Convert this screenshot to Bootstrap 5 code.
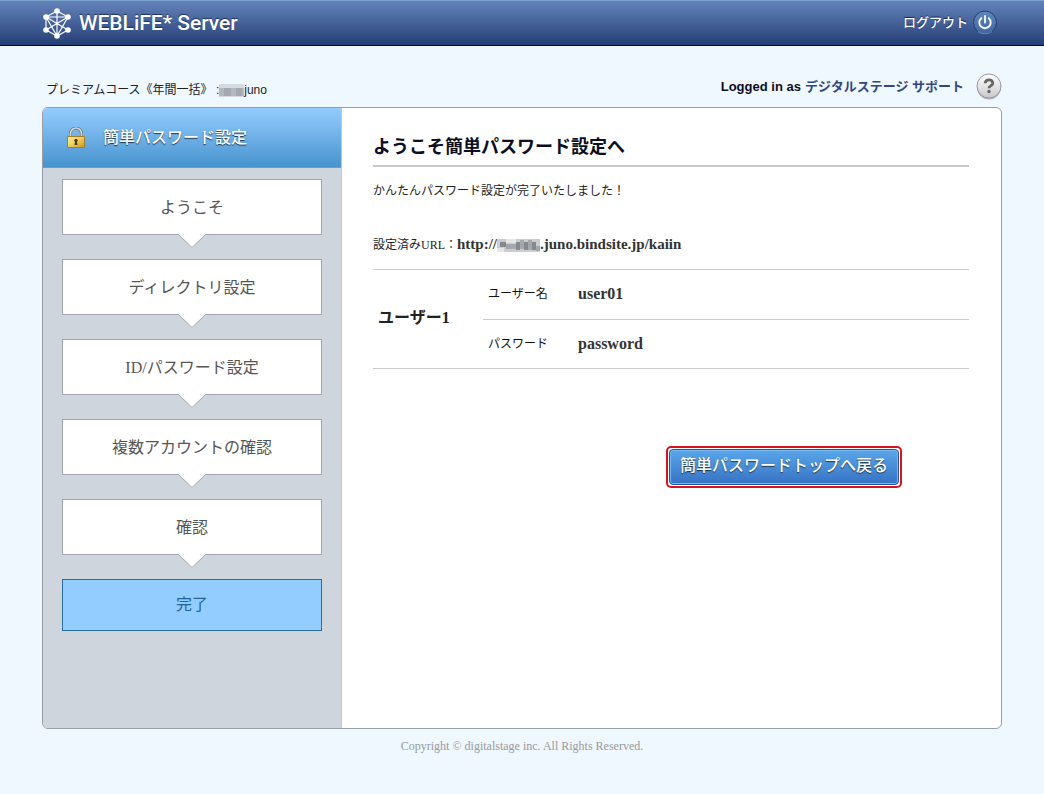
<!DOCTYPE html>
<html lang="ja">
<head>
<meta charset="utf-8">
<meta name="viewport" content="width=device-width, initial-scale=1">
<title>WEBLiFE* Server</title>
<link href="https://cdn.jsdelivr.net/npm/bootstrap@5.3.0/dist/css/bootstrap.min.css" rel="stylesheet">
<style>
body{background:#eff7ff;color:#222;font:12px/18px "Liberation Serif","Noto Sans CJK JP",serif}
.sans{font-family:"Liberation Sans","Noto Sans CJK JP",sans-serif}
.wrap{max-width:960px;margin:0 auto}
.topbar{height:46px;background:linear-gradient(#6583bb,#243f75);border-top:1px solid #7aa3cb;border-bottom:1px solid #050a1c}
.brand{font:500 21px/24px Roboto,sans-serif;text-shadow:0 -1px 1px #1c3260}
.logout{font-size:13px;text-shadow:0 -1px 1px #14265a}
.status{height:61px;padding-top:21px}
.account{font-size:13px}
.account b{color:#0a0f1e}
.account a{color:#33477f}
.help{width:26px;height:28px}
.panel{border:1px solid #999da5;border-radius:6px;min-height:622px;background:#fff;overflow:hidden}
.side{width:299px;background:#ced5dd;border-right:1px solid #c3c7ce}
.side-head{height:60px;padding:0 24px;gap:18px;background:linear-gradient(#94cdff,#4893ce);border-bottom:1px solid #8c969f;font-size:16px;color:#fff;text-shadow:0 1px 1px #234}
.side-head span{font-weight:500}
.steps{padding:11px 19px;gap:24px}
.step{position:relative;height:56px;line-height:56px;font-size:16px;text-align:center;background:#fff;border:1px solid #a0a3a8;color:#555}
.step svg{position:absolute;left:50%;top:100%;margin:0 0 0 -14px}
.step.now{height:52px;line-height:50px;background:#93cdff;border-color:#2a6ca3;color:#23649c}
.main-col{padding:23px 32px 32px 31px}
.title{font-size:18px;line-height:32px;font-weight:700;color:#0a0f24;border-bottom:2px solid #c8c8c8;padding-bottom:2px;margin-bottom:15px}
.url{line-height:24px;padding:32px 0 12px;margin:0;border-bottom:1px solid #ccc}
.url b{font-size:15px;color:#333}
.users{width:100%}
.users th,.users td{height:49px;padding:0 5px;border-bottom:1px solid #ccc}
.users .who{width:110px;font-size:16px;padding-bottom:2px}
.users .lbl{width:90px;font-weight:400;color:#111}
.users td{font-size:16px;font-weight:700;color:#333}
.frame{border:2px solid #d7141d;border-radius:5px;padding:1px;margin:77px 67px 0 0;background:#fff}
.back{border:1px solid #24569b;border-radius:4px;height:36px;padding:0 10px 2px;font:500 16px/20px "Liberation Serif","Noto Sans CJK JP",serif;color:#fff;background:linear-gradient(#5aa7ea,#3672c4);box-shadow:inset 0 0 0 1px #79b5ee;text-shadow:0 1px 1px #234}
.copy{color:#999;padding-top:8px}
</style>
</head>
<body>
<header class="topbar px-3">
  <div class="wrap h-100 d-flex align-items-center justify-content-between text-white">
    <a href="#" class="brand d-flex align-items-center gap-2 text-white text-decoration-none">
      <svg width="29" height="31" viewBox="0 0 29 31" fill="#fff" stroke="#fff" stroke-width="1.2">
        <path fill="none" d="M4 9h22M15 3v25M4 9l22 13M26 9 4 22M4 9l11 19L26 9M4 9v13l11 6 11-6M15 3l11 6M15 3 4 9"/>
        <g stroke="none"><circle cx="15" cy="3" r="2.800"/><circle cx="4" cy="9" r="2.800"/><circle cx="26" cy="9" r="2.800"/><circle cx="4" cy="22" r="2.800"/><circle cx="26" cy="22" r="2.800"/><circle cx="15" cy="28" r="2.800"/></g>
      </svg>
      <span>WEBLiFE* Server</span>
    </a>
    <a href="#" class="logout sans d-flex align-items-center text-white text-decoration-none gap-1 pe-1">
      <span class="fw-medium">ログアウト</span>
      <svg width="26" height="26" viewBox="0 0 26 26"><defs><linearGradient id="pw" x2="0" y2="1"><stop stop-color="#6187bb"/><stop offset="1" stop-color="#40699f"/></linearGradient></defs><circle cx="13" cy="12.500" r="11.500" fill="url(#pw)" stroke="#223f70"/><path d="M6 21.500a11.500 11.500 0 0 0 14 0" fill="none" stroke="#5f8fc4"/><path d="M9.300 8.200a5.700 5.700 0 1 0 7.400 0M13 6v6.500" fill="none" stroke="#fff" stroke-width="1.800" stroke-linecap="round"/></svg>
    </a>
  </div>
</header>
<div class="px-3">
<div class="wrap">
  <div class="status sans d-flex justify-content-between">
    <div class="pt-3 text-nowrap lh-1">
      <span class="ps-1 d-inline-block">プレミアムコース《年間一括》 :<svg width="25" height="15" viewBox="0 0 25 15" class="align-middle"><path fill="#d5dae2" d="M0 1h25v13H0z"/><path fill="#b4b8c0" d="M0 5h25v8H0z"/><path fill="#a4a8b0" d="M5 5h7v8H5zM17 5h6v8h-6z"/></svg>juno</span>
    </div>
    <div class="account d-flex align-items-center gap-1 text-nowrap">
      <b>Logged in as</b><a href="#" class="fw-bold text-decoration-none">デジタルステージ サポート</a>
      <a href="#" aria-label="ヘルプ" class="ms-2"><svg class="help d-block" viewBox="0 0 26 28"><defs><linearGradient id="hp" x2="0" y2="1"><stop stop-color="#fff"/><stop offset="1" stop-color="#c9c9cc"/></linearGradient></defs><circle cx="13" cy="14.500" r="12" fill="#b0b4bb"/><circle cx="13" cy="13" r="12" fill="url(#hp)" stroke="#96999f"/><path d="M9.200 10.300c0-4.700 7.600-4.700 7.600 0 0 2.500-3.800 2.300-3.800 5" fill="none" stroke="#666" stroke-width="2.800"/><circle cx="13" cy="18.500" r="1.700" fill="#666"/></svg></a>
    </div>
  </div>
  <div class="panel d-flex">
    <aside class="side flex-shrink-0">
      <div class="side-head d-flex align-items-center">
        <svg width="18" height="22" viewBox="0 0 18 22"><defs><linearGradient id="lk" x2="1" y2="1"><stop stop-color="#fff2a4"/><stop offset=".5" stop-color="#efcd5a"/><stop offset="1" stop-color="#c8922a"/></linearGradient></defs><path d="M3.500 10V6.500a5.500 5.500 0 0 1 11 0V10" fill="none" stroke="#667079" stroke-width="3"/><path d="M3.500 10V6.500a5.500 5.500 0 0 1 11 0V10" fill="none" stroke="#d4dade" stroke-width="1.600"/><path d="M.5 9.500h17v11H.5z" fill="url(#lk)" stroke="#a87c24"/><circle cx="9" cy="13.500" r="1.700" fill="#4b3b12"/><path d="M8.300 14h1.400l.8 4h-3z" fill="#4b3b12"/></svg>
        <span>簡単パスワード設定</span>
      </div>
      <div class="steps d-flex flex-column">
        <div class="step">ようこそ<svg width="28" height="15" viewBox="0 0 28 15"><path d="M0 0h28L14 14z" fill="#fff"/><path d="M.5.500 14 13.500 27.500.500" fill="none" stroke="#a0a3a8"/></svg></div>
        <div class="step">ディレクトリ設定<svg width="28" height="15" viewBox="0 0 28 15"><path d="M0 0h28L14 14z" fill="#fff"/><path d="M.5.500 14 13.500 27.500.500" fill="none" stroke="#a0a3a8"/></svg></div>
        <div class="step">ID/パスワード設定<svg width="28" height="15" viewBox="0 0 28 15"><path d="M0 0h28L14 14z" fill="#fff"/><path d="M.5.500 14 13.500 27.500.500" fill="none" stroke="#a0a3a8"/></svg></div>
        <div class="step">複数アカウントの確認<svg width="28" height="15" viewBox="0 0 28 15"><path d="M0 0h28L14 14z" fill="#fff"/><path d="M.5.500 14 13.500 27.500.500" fill="none" stroke="#a0a3a8"/></svg></div>
        <div class="step">確認<svg width="28" height="15" viewBox="0 0 28 15"><path d="M0 0h28L14 14z" fill="#fff"/><path d="M.5.500 14 13.500 27.500.500" fill="none" stroke="#a0a3a8"/></svg></div>
        <div class="step now">完了</div>
      </div>
    </aside>
    <main class="main-col flex-grow-1">
      <h1 class="title">ようこそ簡単パスワード設定へ</h1>
      <p class="m-0">かんたんパスワード設定が完了いたしました！</p>
      <p class="url">設定済みURL：<b>http://<svg width="43" height="13" viewBox="0 0 43 13" class="align-middle"><path fill="#c9ccd0" d="M0 0h43v13H0z"/><path fill="#85888d" d="M3 3h6v5H3zM19 3h4v8h-4zM27 3h4v8h-4zM35 3h4v8h-4z"/><path fill="#a4a7ab" d="M9 5h10v5H9zM23 1h4v9h-4zM31 1h4v10h-4zM39 7h4v5h-4z"/><path fill="#e4e6e9" d="M9 0h10v4H9zM0 9h7v4H0z"/></svg>.juno.bindsite.jp/kaiin</b></p>
      <table class="users">
        <tr><th class="who" rowspan="2" scope="rowgroup">ユーザー1</th><th class="lbl" scope="row">ユーザー名</th><td>user01</td></tr>
        <tr><th class="lbl" scope="row">パスワード</th><td>password</td></tr>
      </table>
      <div class="d-flex justify-content-end">
        <div class="frame"><button type="button" class="back d-block">簡単パスワードトップへ戻る</button></div>
      </div>
    </main>
  </div>
  <footer class="copy text-center">Copyright © digitalstage inc. All Rights Reserved.</footer>
</div>
</div>
<script src="https://cdn.jsdelivr.net/npm/bootstrap@5.3.0/dist/js/bootstrap.bundle.min.js"></script>
</body>
</html>
